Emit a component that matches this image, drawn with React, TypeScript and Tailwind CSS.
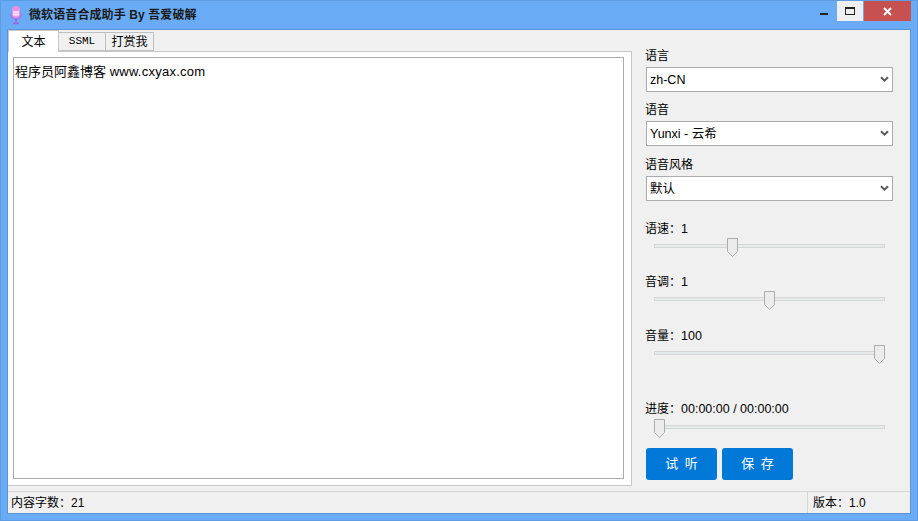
const cjk = { fontFamily: '"Liberation Sans", "Noto Sans CJK SC", sans-serif' };

const Pick = ({ label, value, top }: { label: string; value: string; top: string }) => (
  <div className={top}>
    <div className="h-4 text-[12px] leading-[18px] text-black">{label}</div>
    <div className="ml-px mt-1 flex h-[25px] w-[247px] items-center justify-between border border-[#ababab] bg-white pl-[3px] pr-[3px] text-[12.5px] leading-4 text-black">
      <span>{value}</span>
      <svg width="9" height="7" viewBox="0 0 9 7">
        <path d="M1 1.2l3.5 3.5L8 1.2" fill="none" stroke="#5a5a5a" strokeWidth="2" />
      </svg>
    </div>
  </div>
);

const Slider = ({ label, value, at, top, gap }: { label: string; value: string; at: number; top: string; gap: string }) => (
  <div className={top}>
    <div className="h-4 text-[12px] leading-4 text-black">
      {label}
      <span className="text-[12.5px]">{value}</span>
    </div>
    <div className={`${gap} relative ml-[9px] h-[19px] w-[231px] pt-[6px]`}>
      <div className="h-1 w-full border border-[#d6d6d6] bg-[#e7eaea]" />
      <svg
        className="absolute top-0"
        style={{ left: at }}
        width="11"
        height="19"
        viewBox="0 0 11 19"
      >
        <path d="M.5.5h10v13l-5 5-5-5z" fill="#ececec" stroke="#acacac" />
      </svg>
    </div>
  </div>
);

const App = () => {
  return (
    <div
      style={cjk}
      className="flex h-[521px] w-[918px] flex-col overflow-hidden border border-[#5d9be3] bg-[#69abf5]"
    >
      {/* title bar */}
      <div className="flex h-[28px] shrink-0">
        <svg className="ml-[8px] mt-[5px]" width="14" height="19" viewBox="0 0 14 19">
          <rect x="3" y="0" width="8" height="12" rx="4" fill="#ee8fe6" />
          <rect x="4" y="5" width="6" height="5" fill="#f8d2f2" />
          <path d="M1.5 7.5c0 3.5 2.5 5.5 5.5 5.5s5.5-2 5.5-5.5" fill="none" stroke="#a878e6" strokeWidth="1.5" />
          <path d="M7 13v4M4 17.5h6" stroke="#a060dc" strokeWidth="1.5" />
        </svg>
        <div className="ml-[6px] mt-[6px] h-4 text-[12px] font-bold leading-4 tracking-[0.1px] text-[#1a1a1a]">
          微软语音合成助手 By 吾爱破解
        </div>
        <div className="ml-auto flex h-[20px] items-start">
          <div className="mr-[9px] mt-[12px] h-[2px] w-[8px] bg-[#222]" />
          <div className="flex h-[20px] w-[26px] items-center justify-center bg-[#efefef]">
            <div className="h-[8px] w-[10px] border border-t-2 border-[#222]" />
          </div>
          <div className="ml-px mr-[6px] flex h-[20px] w-[47px] items-center justify-center bg-[#c75050]">
            <svg width="9" height="9" viewBox="0 0 9 9">
              <path d="M1 1l7 7M8 1L1 8" stroke="#fff" strokeWidth="2" />
            </svg>
          </div>
        </div>
      </div>

      {/* client */}
      <div className="mx-[6px] mb-[6px] flex flex-1 flex-col border border-[#5d93d6] bg-[#f0f0f0]">
        <div className="flex flex-1">
          <div className="flex w-[624px] flex-col">
            <div className="flex h-[21px] items-end text-[12px] text-black">
              <div className="z-10 -mb-px flex h-[22px] w-[51px] items-center justify-center border border-b-0 border-[#c8c8c8] bg-white">
                文本
              </div>
              <div
                style={{ fontFamily: '"Liberation Mono", monospace' }}
                className="flex h-[19px] w-[47px] items-center justify-center border border-l-0 border-[#c0c0c0] bg-[#f0f0f0] text-[11px]"
              >
                SSML
              </div>
              <div className="flex h-[19px] w-[48px] items-center justify-center border border-l-0 border-[#c0c0c0] bg-[#f0f0f0]">
                打赏我
              </div>
            </div>
            <div className="h-[435px] border border-l-0 border-[#c8c8c8] bg-white pb-[6px] pl-[5px] pr-[7px] pt-[5px]">
              <div className="h-full border border-[#ababab] pl-px pt-[6px] text-[13px] leading-4 text-black">
                程序员阿鑫博客 <span className="tracking-[0.25px]">www.cxyax.com</span>
              </div>
            </div>
          </div>

          <div className="flex-1 pl-[13px]">
            <Pick label="语言" value="zh-CN" top="mt-[17px]" />
            <Pick label="语音" value="Yunxi - 云希" top="mt-[9px]" />
            <Pick label="语音风格" value="默认" top="mt-[10px]" />
            <Slider label="语速：" value="1" at={73} top="mt-[20px]" gap="mt-px" />
            <Slider label="音调：" value="1" at={110} top="mt-[17px]" gap="mt-px" />
            <Slider label="音量：" value="100" at={220} top="mt-[18px]" gap="mt-px" />
            <Slider label="进度：" value="00:00:00 / 00:00:00" at={0} top="mt-[37px]" gap="mt-[2px]" />
            <div className="ml-px mt-[10px] flex gap-[5px] text-[13px] text-white [word-spacing:3px]">
              <div className="flex h-[32px] w-[71px] items-center justify-center rounded-[3px] bg-[#0078d7]">试 听</div>
              <div className="flex h-[32px] w-[71px] items-center justify-center rounded-[3px] bg-[#0078d7]">保 存</div>
            </div>
          </div>
        </div>

        {/* status bar */}
        <div className="flex h-[22px] shrink-0 items-center border-t border-[#d7d7d7] text-[12px] text-black">
          <div className="flex-1 pl-[3px]">内容字数：21</div>
          <div className="flex h-full w-[103px] items-center border-l border-[#d7d7d7] pl-[5px]">版本：1.0</div>
        </div>
      </div>
    </div>
  );
};

export default App;
